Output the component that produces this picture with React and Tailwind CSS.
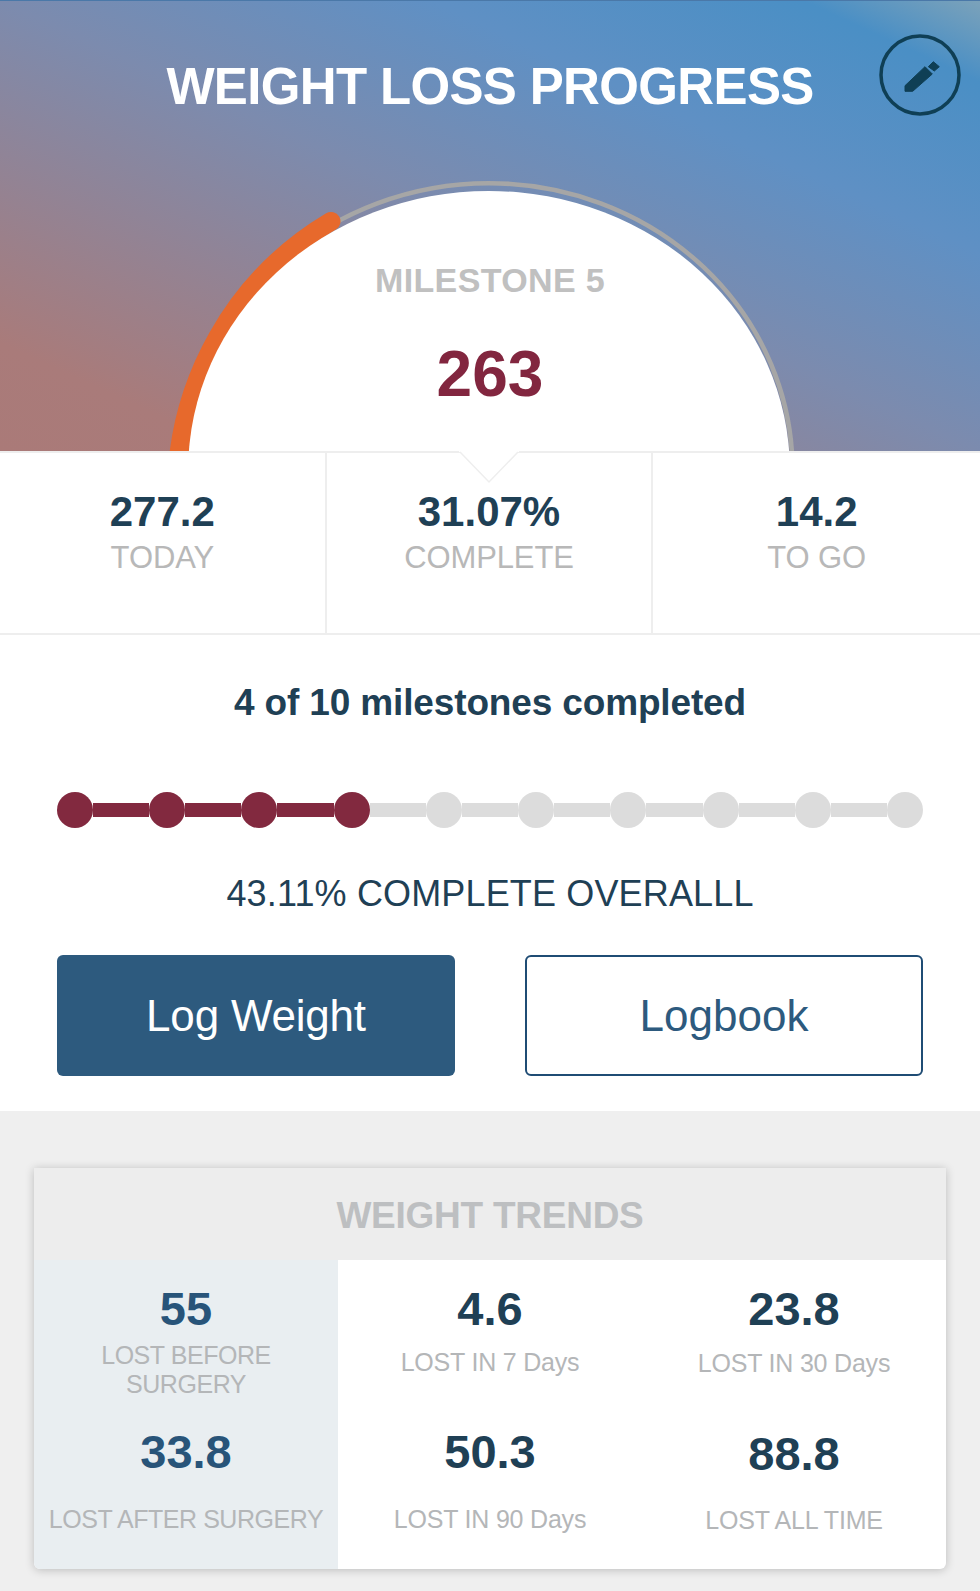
const FONT = { fontFamily: '"Liberation Sans", Arial, sans-serif' };

const DOTS = [0, 1, 2, 3, 4, 5, 6, 7, 8, 9];

function EditButton() {
  return (
    <button className="absolute right-[19px] top-[33px]" aria-label="Edit">
      <svg width="82" height="82" viewBox="29 14 82 82" className="block">
        <circle cx="70" cy="55" r="39" fill="none" stroke="#0f3f55" strokeWidth="3.5" />
        <path
          d="M55 65.7 L75 46.7 L82.3 54 L62.7 71.3 L55 71.3 Z"
          fill="#0f3f55"
          stroke="#0f3f55"
          strokeWidth="1"
          strokeLinejoin="round"
        />
        <path
          d="M78.3 46.7 L83.3 41.7 L89.3 46.7 L84.3 51 Z"
          fill="#0f3f55"
          stroke="#0f3f55"
          strokeWidth="1"
          strokeLinejoin="round"
        />
      </svg>
    </button>
  );
}

// Dome is a slight ellipse, the orange progress runs on a wider arc behind it
function Gauge() {
  return (
    <svg
      width="980"
      height="451"
      viewBox="0 0 980 451"
      className="absolute left-0 top-[-1px] block"
    >
      <ellipse cx="489" cy="470" rx="303.5" ry="286.8" fill="none" stroke="#a6a6a6" strokeWidth="4.5" />
      <path
        d="M176.5 494 A312.5 316 0 0 1 331 221.4"
        fill="none"
        stroke="#e7692c"
        strokeWidth="19"
        strokeLinecap="round"
      />
      <ellipse cx="489" cy="470" rx="300.8" ry="279" fill="#ffffff" />
    </svg>
  );
}

function Stat({ value, label, divider }) {
  return (
    <div className={`h-full pt-[35px] text-center ${divider ? "border-r-2 border-[#eeeeee]" : ""}`}>
      <div className="text-[42px] font-bold leading-[48px] text-[#1f4055]">{value}</div>
      <div className="mt-1 text-[31px] leading-9 tracking-[-0.1px] text-[#b8b8b8]">{label}</div>
    </div>
  );
}

function Trend({ value, label, blue, className, labelClassName }) {
  return (
    <div className={`text-center ${className}`}>
      <div className={`text-[47px] font-bold leading-[50px] ${blue ? "text-[#285479]" : "text-[#1f4055]"}`}>
        {value}
      </div>
      <div
        className={`text-[25px] leading-[29px] text-[#b4b6b8] ${
          blue ? "tracking-[-0.45px]" : "tracking-[-0.2px]"
        } ${labelClassName}`}
      >
        {label}
      </div>
    </div>
  );
}

export default function App() {
  return (
    <div className="w-[980px] h-[1591px] overflow-hidden bg-[#efefef]" style={FONT}>
      {/* Header with dome */}
      <div className="relative h-[451px] overflow-hidden border-t border-[#4a78a8] bg-[linear-gradient(to_top_right,#aa7a78_0%,#a97b7a_12%,#7c8bae_50%,#5f90c4_72%,#4a8fc5_91%,#7ba2ba_100%)]">
        <Gauge />
        <div className="relative text-center">
          <h1 className="pt-[56px] text-[51px] font-bold leading-[60px] tracking-[-0.65px] text-white">
            WEIGHT LOSS PROGRESS
          </h1>
          <div className="mt-[143px] text-[34px] font-bold leading-10 tracking-[0.35px] text-[#c0c0c0]">
            MILESTONE 5
          </div>
          <div className="mt-[38px] text-[64px] font-bold leading-[72px] text-[#82263f]">263</div>
        </div>
        <EditButton />
      </div>

      {/* Today / complete / to go */}
      <div className="relative grid h-[184px] grid-cols-3 border-y-2 border-[#eeeeee] bg-white">
        <Stat value="277.2" label="TODAY" divider />
        <Stat value="31.07%" label="COMPLETE" divider />
        <Stat value="14.2" label="TO GO" />
        <svg width="60" height="33" viewBox="0 0 60 33" className="absolute left-[459px] top-[-2px]">
          <path d="M0 1 L1 1 L30 31 L59 1 L60 1 L60 0 L0 0 Z" fill="#ffffff" />
          <path d="M1 1 L30 31 L59 1" fill="#ffffff" stroke="#eeeeee" strokeWidth="1.5" />
        </svg>
      </div>

      {/* Milestones */}
      <div className="h-[476px] bg-white px-[57px] pt-[48px]">
        <div className="text-center text-[37px] font-bold leading-[40px] tracking-[-0.15px] text-[#1f4055]">
          4 of 10 milestones completed
        </div>
        <div className="mt-[69px] flex items-center">
          {DOTS.map((i) => (
            <div key={i} className={`flex items-center ${i < 9 ? "flex-1" : ""}`}>
              <div className={`h-9 w-9 shrink-0 rounded-full ${i < 4 ? "bg-[#82293f]" : "bg-[#dcdcdc]"}`} />
              {i < 9 && <div className={`h-3.5 flex-1 ${i < 3 ? "bg-[#82293f]" : "bg-[#dcdcdc]"}`} />}
            </div>
          ))}
        </div>
        <div className="mt-[45px] text-center text-[36px] leading-[42px] tracking-[0.15px] text-[#1f4055]">
          43.11% COMPLETE OVERALLL
        </div>
        <div className="mt-[40px] flex justify-between">
          <button className="h-[121px] w-[398px] rounded-md bg-[#2d5a7e] text-[44px] tracking-[-0.2px] text-white">
            Log Weight
          </button>
          <button className="h-[121px] w-[398px] rounded-md border-2 border-[#1f4c74] bg-white text-[44px] text-[#2d5a7e]">
            Logbook
          </button>
        </div>
      </div>

      {/* Weight trends */}
      <div className="px-[34px] pt-[57px]">
        <div className="overflow-hidden rounded-b-md bg-white shadow-[0_1px_10px_rgba(0,0,0,0.22)]">
          <div className="h-[92px] bg-[#ededed] pt-[27px] text-center text-[37px] font-bold leading-[42px] tracking-[-0.25px] text-[#bdbfc1]">
            WEIGHT TRENDS
          </div>
          <div className="grid h-[309px] grid-cols-3">
            <div className="bg-[#e9eef1] pt-6">
              <Trend value="55" label={<>LOST BEFORE<br />SURGERY</>} blue labelClassName="mt-[7px]" />
              <Trend value="33.8" label="LOST AFTER SURGERY" blue className="mt-7" labelClassName="mt-7" />
            </div>
            <div className="pt-6">
              <Trend value="4.6" label="LOST IN 7 Days" labelClassName="mt-3.5" />
              <Trend value="50.3" label="LOST IN 90 Days" className="mt-[50px]" labelClassName="mt-7" />
            </div>
            <div className="pt-6">
              <Trend value="23.8" label="LOST IN 30 Days" labelClassName="mt-[15px]" />
              <Trend value="88.8" label="LOST ALL TIME" className="mt-[51px]" labelClassName="mt-[27px]" />
            </div>
          </div>
        </div>
      </div>
    </div>
  );
}
